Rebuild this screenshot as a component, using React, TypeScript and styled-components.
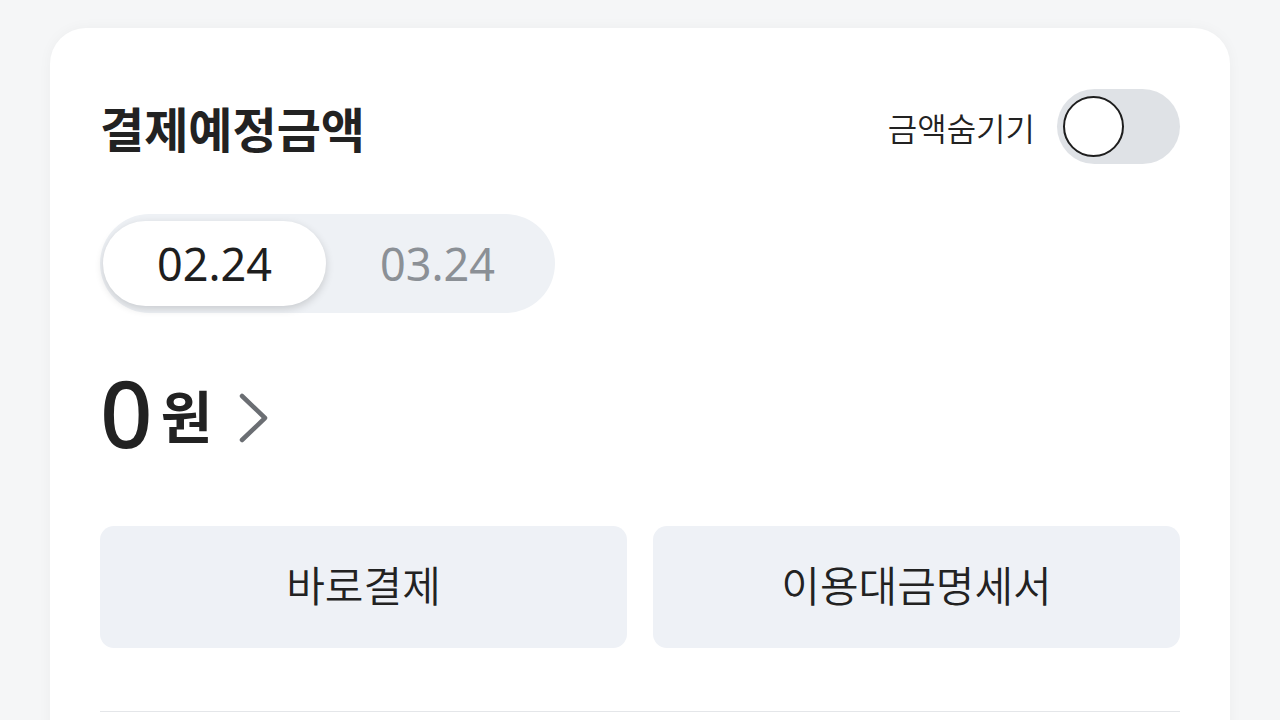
import React, { useState } from 'react'
import styled, { createGlobalStyle } from 'styled-components'

const GlobalStyle = createGlobalStyle`
  html, body {
    margin: 0;
    padding: 0;
    background: #f5f6f7;
    height: 100%;
    overflow: hidden;
  }
  body {
    font-family: "Noto Sans", "Noto Sans CJK KR", sans-serif;
    color: #222;
  }
`

const Page = styled.div`
  padding: 28px 50px 0;
  height: 100vh;
  box-sizing: border-box;
`

const Card = styled.section`
  background: #fff;
  border-radius: 36px 36px 0 0;
  box-shadow: 0 0 14px rgba(0, 0, 0, 0.04);
  padding: 61px 50px 40px;
  min-height: 800px;
  box-sizing: border-box;
`

const Header = styled.div`
  display: flex;
  align-items: center;
  justify-content: space-between;
  height: 75px;
`

const Title = styled.h2`
  margin: 0;
  font-family: "Noto Sans CJK KR", sans-serif;
  font-size: 48px;
  font-weight: 700;
  color: #222;
`

const HideToggle = styled.label`
  display: flex;
  align-items: center;
  gap: 22px;
  font-family: "Noto Sans CJK KR", sans-serif;
  font-size: 32px;
  font-weight: 350;
  color: #222;
`

const Switch = styled.button<{ $on: boolean }>`
  position: relative;
  width: 123px;
  height: 75px;
  border: none;
  border-radius: 38px;
  background: ${(p) => (p.$on ? '#3b6cf6' : '#dfe2e6')};
  padding: 0;
  cursor: pointer;
`

const Knob = styled.span<{ $on: boolean }>`
  position: absolute;
  top: 7px;
  left: ${(p) => (p.$on ? '57px' : '6px')};
  width: 57px;
  height: 57px;
  border-radius: 50%;
  background: #fff;
  border: 2px solid #1e1e1e;
`

const Segment = styled.div`
  margin-top: 50px;
  display: grid;
  grid-template-columns: 223px 223px;
  width: 455px;
  height: 99px;
  box-sizing: border-box;
  padding: 7px 3px;
  background: #eef1f5;
  border-radius: 50px;
`

const SegmentItem = styled.button<{ $active: boolean }>`
  border: none;
  border-radius: 43px;
  font-family: "Noto Sans", sans-serif;
  font-size: 45px;
  font-weight: 400;
  color: ${(p) => (p.$active ? '#1e1e1e' : '#8b9096')};
  background: ${(p) => (p.$active ? '#fff' : 'transparent')};
  box-shadow: ${(p) => (p.$active ? '0 3px 9px rgba(0,0,0,0.16)' : 'none')};
  cursor: pointer;
  padding: 0;
`

const AmountRow = styled.div`
  margin-top: 50px;
  height: 100px;
  display: flex;
  align-items: center;
`

const AmountValue = styled.span`
  font-family: "Noto Sans", sans-serif;
  font-size: 92px;
  font-weight: 500;
  line-height: 1;
  color: #222;
`

const Won = styled.span`
  font-family: "Noto Sans CJK KR", sans-serif;
  font-size: 56px;
  font-weight: 700;
  margin-left: 8px;
  color: #222;
`

const Chevron = styled.svg`
  margin-left: 26px;
  margin-top: 10px;
`

const Actions = styled.div`
  margin-top: 63px;
  display: grid;
  grid-template-columns: 1fr 1fr;
  gap: 26px;
`

const ActionButton = styled.button`
  height: 122px;
  border: none;
  border-radius: 14px;
  background: #eef1f6;
  font-family: "Noto Sans CJK KR", sans-serif;
  font-size: 42px;
  font-weight: 350;
  color: #222;
  cursor: pointer;
  padding: 0 0 8px;
`

const Divider = styled.hr`
  margin: 63px 0 0;
  border: none;
  border-top: 1px solid #e4e6e9;
`

const months = ['02.24', '03.24']

export default function App() {
  const [hidden, setHidden] = useState(false)
  const [month, setMonth] = useState(0)

  return (
    <>
      <GlobalStyle />
      <Page>
        <Card>
          <Header>
            <Title>결제예정금액</Title>
            <HideToggle>
              금액숨기기
              <Switch $on={hidden} onClick={() => setHidden(!hidden)} aria-label="금액숨기기">
                <Knob $on={hidden} />
              </Switch>
            </HideToggle>
          </Header>
          <Segment>
            {months.map((m, i) => (
              <SegmentItem key={m} $active={month === i} onClick={() => setMonth(i)}>
                {m}
              </SegmentItem>
            ))}
          </Segment>
          <AmountRow>
            <AmountValue>{hidden ? '***' : '0'}</AmountValue>
            <Won>원</Won>
            <Chevron width="32" height="52" viewBox="0 0 32 52" fill="none">
              <polyline points="4,4 27,26 4,48" stroke="#6b6e73" strokeWidth="4.5" strokeLinecap="round" strokeLinejoin="round" />
            </Chevron>
          </AmountRow>
          <Actions>
            <ActionButton>바로결제</ActionButton>
            <ActionButton>이용대금명세서</ActionButton>
          </Actions>
          <Divider />
        </Card>
      </Page>
    </>
  )
}
